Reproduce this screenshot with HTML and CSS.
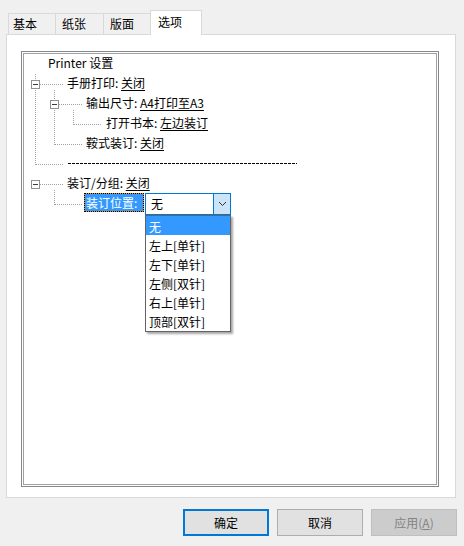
FILE: index.html
```html
<!DOCTYPE html>
<html lang="zh-CN">
<head>
<meta charset="utf-8">
<title>选项</title>
<link rel="stylesheet" href="styles.css">
</head>
<body>
<div class="dialog">
  <div class="tabs">
    <div class="tab tab-a">基本</div>
    <div class="tab tab-b">纸张</div>
    <div class="tab tab-c">版面</div>
    <div class="tab tab-active">选项</div>
  </div>
  <div class="panel">
    <div class="tree">
      <div class="tree-inner">
        <svg class="tree-lines" width="412" height="430" viewBox="0 0 412 430">
          <g transform="translate(-24,-54)" fill="none" stroke-width="1" shape-rendering="crispEdges">
            <g class="dots" stroke="#a0a0a0" stroke-dasharray="1 1">
              <line x1="35.5" y1="74" x2="35.5" y2="80"/>
              <line x1="35.5" y1="90" x2="35.5" y2="165"/>
              <line x1="40" y1="84.5" x2="63" y2="84.5"/>
              <line x1="54.5" y1="90" x2="54.5" y2="100"/>
              <line x1="54.5" y1="110" x2="54.5" y2="145"/>
              <line x1="59" y1="104.5" x2="83" y2="104.5"/>
              <line x1="73.5" y1="110" x2="73.5" y2="125"/>
              <line x1="74" y1="124.5" x2="102" y2="124.5"/>
              <line x1="55" y1="144.5" x2="83" y2="144.5"/>
              <line x1="36" y1="164.5" x2="63" y2="164.5"/>
              <line x1="40" y1="184.5" x2="63" y2="184.5"/>
              <line x1="54.5" y1="190" x2="54.5" y2="205"/>
              <line x1="55" y1="204.5" x2="83" y2="204.5"/>
            </g>
            <g class="box">
              <rect x="31.5" y="80.5" width="8" height="8" fill="#fff" stroke="#919191"/>
              <line x1="33" y1="84.5" x2="38" y2="84.5" stroke="#3c3c3c"/>
              <rect x="50.5" y="100.5" width="8" height="8" fill="#fff" stroke="#919191"/>
              <line x1="52" y1="104.5" x2="57" y2="104.5" stroke="#3c3c3c"/>
              <rect x="31.5" y="180.5" width="8" height="8" fill="#fff" stroke="#919191"/>
              <line x1="33" y1="184.5" x2="38" y2="184.5" stroke="#3c3c3c"/>
            </g>
          </g>
        </svg>
        <div class="row lv0">Printer 设置</div>
        <div class="row lv1">手册打印: <span class="val">关闭</span></div>
        <div class="row lv2">输出尺寸: <span class="val">A4打印至A3</span></div>
        <div class="row lv3">打开书本: <span class="val">左边装订</span></div>
        <div class="row lv2">鞍式装订: <span class="val">关闭</span></div>
        <div class="row lvsep"><span class="dashes"></span></div>
        <div class="row lv1">装订/分组: <span class="val">关闭</span></div>
        <div class="row row-edit">
          <span class="sel-label">装订位置:</span>
          <div class="combo">
            <span class="combo-text">无</span>
            <span class="combo-btn">
              <svg width="9" height="6" viewBox="0 0 9 6"><path d="M1 1 L4.5 4.5 L8 1" fill="none" stroke="#333" stroke-width="1"/></svg>
            </span>
            <ul class="dropdown">
              <li class="opt opt-active">无</li>
              <li class="opt">左上[单针]</li>
              <li class="opt">左下[单针]</li>
              <li class="opt">左侧[双针]</li>
              <li class="opt">右上[单针]</li>
              <li class="opt">顶部[双针]</li>
            </ul>
          </div>
        </div>
      </div>
    </div>
  </div>
  <div class="buttons">
    <button class="btn btn-default">确定</button>
    <button class="btn">取消</button>
    <button class="btn btn-disabled">应用(<u>A</u>)</button>
  </div>
</div>
</body>
</html>
```
FILE: styles.css
```css
* { box-sizing: border-box; }
html, body {
  margin: 0;
  padding: 0;
  background: #f0f0f0;
}
body {
  width: 464px;
  height: 546px;
  overflow: hidden;
  font-family: "Noto Sans CJK SC", "Noto Sans", sans-serif;
  font-size: 12px;
  color: #000;
}
.dialog {
  width: 464px;
  height: 546px;
}
.tabs {
  display: flex;
  align-items: flex-end;
  height: 34px;
  padding: 10px 0 0 8px;
}
.tab {
  height: 21px;
  line-height: 19px;
  padding-left: 5px;
  background: #f0f0f0;
  border: 1px solid #d9d9d9;
  border-right: none;
  border-bottom: none;
}
.tab-a { width: 47px; padding-left: 4px; }
.tab-b { width: 48px; padding-left: 6px; }
.tab-c { width: 47px; padding-left: 6px; }
.tab-active {
  width: 52px;
  height: 25px;
  margin-bottom: -1px;
  padding-left: 7px;
  line-height: 21px;
  background: #fff;
  border-right: 1px solid #d9d9d9;
  position: relative;
  z-index: 1;
}
.panel {
  margin-left: 6px;
  width: 450px;
  height: 464px;
  background: #fff;
  border: 1px solid #d9d9d9;
  padding: 16px 0 0 14px;
}
.tree {
  width: 418px;
  height: 436px;
  border: 1px solid #828790;
  padding: 1px;
  background: #fff;
}
.tree-inner {
  position: relative;
  width: 100%;
  height: 100%;
  border: 1px solid #a0a0a0;
}
.tree-lines {
  position: absolute;
  left: 0;
  top: 0;
}
.row {
  position: relative;
  height: 20px;
  line-height: 20px;
  display: flex;
  align-items: center;
  white-space: pre;
}
.row:first-of-type { margin-top: -1px; }
.lv0 { padding-left: 24px; }
.lv1 { padding-left: 43px; }
.lv2 { padding-left: 62px; }
.lv3 { padding-left: 82px; }
.lvsep { padding-left: 44px; }
.val { text-decoration: underline; text-underline-offset: 2px; }
.dashes {
  display: block;
  width: 229px;
  height: 1px;
  background: repeating-linear-gradient(90deg, #000 0 3px, transparent 3px 4px);
}
.row-edit {
  padding-left: 60px;
  align-items: flex-start;
  z-index: 2;
  white-space: normal;
}
.sel-label {
  display: block;
  width: 60px;
  height: 19px;
  line-height: 17px;
  padding-left: 1px;
  color: #fff;
  white-space: nowrap;
  border: 1px dotted #000;
  background: linear-gradient(#3399ff, #3399ff) padding-box, #e8902a border-box;
}
.combo {
  position: relative;
  margin-left: 1px;
  width: 86px;
  height: 22px;
  border: 1px solid #0078d7;
  background: #fff;
  display: flex;
}
.combo-text {
  flex: 1;
  line-height: 20px;
  padding-left: 5px;
}
.combo-btn {
  width: 17px;
  height: 20px;
  background: #cce4f7;
  border-left: 1px solid #0078d7;
  display: flex;
  align-items: center;
  justify-content: center;
}
.dropdown {
  position: absolute;
  left: -1px;
  top: 21px;
  width: 86px;
  margin: 0;
  padding: 0 0 1px;
  list-style: none;
  background: #fff;
  border: 1px solid #646464;
  box-shadow: 2px 2px 2px rgba(0, 0, 0, 0.35);
}
.opt {
  height: 19px;
  line-height: 21px;
  padding-left: 3px;
  white-space: nowrap;
}
.opt-active {
  background: #3399ff;
  color: #fff;
}
.buttons {
  display: flex;
  justify-content: flex-end;
  gap: 8px;
  padding: 11px 7px 0 0;
}
.btn {
  width: 86px;
  height: 27px;
  font-family: inherit;
  font-size: 12px;
  color: #000;
  background: #e1e1e1;
  border: 1px solid #adadad;
  padding: 0;
  margin: 0;
}
.btn-default {
  border: 2px solid #0078d7;
}
.btn-disabled {
  background: #cccccc;
  border-color: #bfbfbf;
  color: #838383;
}
```
